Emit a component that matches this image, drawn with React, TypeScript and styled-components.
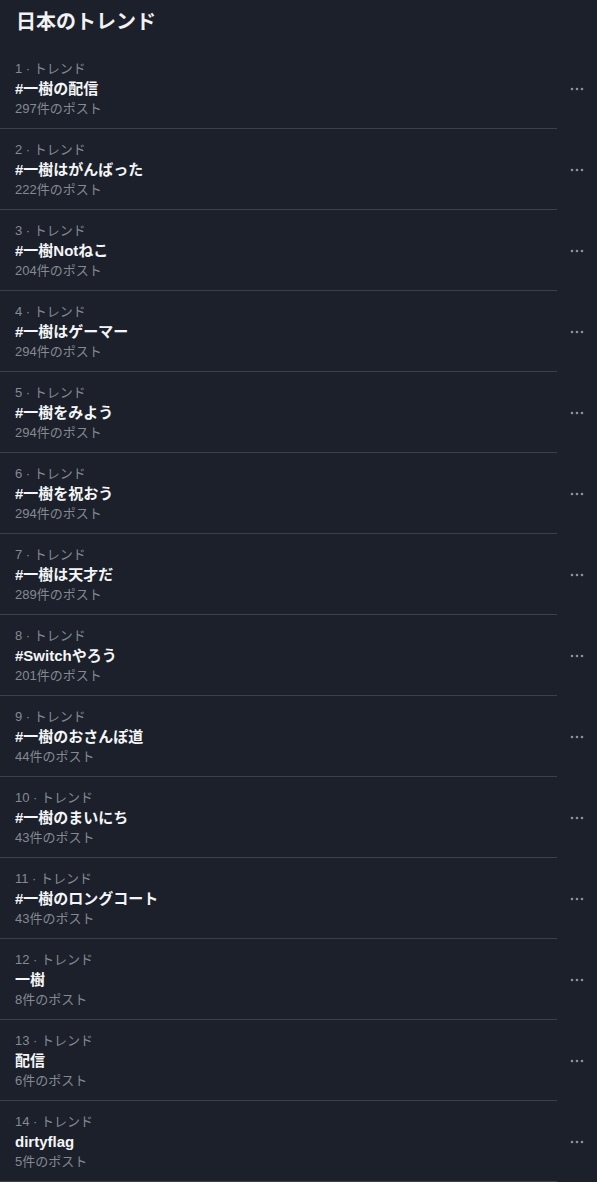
import React from "react";
import styled, { createGlobalStyle } from "styled-components";

const GlobalStyle = createGlobalStyle`
  html, body {
    margin: 0;
    padding: 0;
    background: #1b202a;
  }
  body {
    font-family: "Liberation Sans", "Noto Sans CJK JP", sans-serif;
    -webkit-font-smoothing: antialiased;
  }
`;

const Page = styled.div`
  width: 597px;
  min-height: 1182px;
  background: #1b202a;
  color: #ffffff;
  overflow: hidden;
`;

const Header = styled.h1`
  margin: 0;
  padding: 10px 16px 14px;
  font-size: 20px;
  line-height: 24px;
  font-weight: 700;
  color: #f1f2f4;
`;

const List = styled.div`
  display: flex;
  flex-direction: column;
`;

const Row = styled.div`
  display: flex;
  align-items: stretch;
`;

const Main = styled.div`
  width: 557px;
  box-sizing: border-box;
  padding: 11px 0 9px 15px;
  border-bottom: 1px solid #3b4049;
  display: flex;
  flex-direction: column;
`;

const Meta = styled.div`
  font-size: 13px;
  line-height: 20px;
  color: #858a92;
`;

const Title = styled.div`
  font-size: 15px;
  line-height: 20px;
  font-weight: 700;
  color: #f4f5f7;
`;

const Count = styled.div`
  font-size: 13px;
  line-height: 20px;
  color: #858a92;
`;

const More = styled.div`
  flex: 1;
  display: flex;
  align-items: center;
  justify-content: center;
  color: #8d9199;
`;

const Dots = () => (
  <svg width="14" height="4" viewBox="0 0 14 4" aria-hidden="true">
    <circle cx="2" cy="2" r="1.3" fill="currentColor" />
    <circle cx="7" cy="2" r="1.3" fill="currentColor" />
    <circle cx="12" cy="2" r="1.3" fill="currentColor" />
  </svg>
);

type Trend = { title: string; posts: number };

const trends: Trend[] = [
  { title: "#一樹の配信", posts: 297 },
  { title: "#一樹はがんばった", posts: 222 },
  { title: "#一樹Notねこ", posts: 204 },
  { title: "#一樹はゲーマー", posts: 294 },
  { title: "#一樹をみよう", posts: 294 },
  { title: "#一樹を祝おう", posts: 294 },
  { title: "#一樹は天才だ", posts: 289 },
  { title: "#Switchやろう", posts: 201 },
  { title: "#一樹のおさんぽ道", posts: 44 },
  { title: "#一樹のまいにち", posts: 43 },
  { title: "#一樹のロングコート", posts: 43 },
  { title: "一樹", posts: 8 },
  { title: "配信", posts: 6 },
  { title: "dirtyflag", posts: 5 },
];

export default function App() {
  return (
    <>
      <GlobalStyle />
      <Page>
        <Header>日本のトレンド</Header>
        <List>
          {trends.map((t, i) => (
            <Row key={i}>
              <Main>
                <Meta>{i + 1} · トレンド</Meta>
                <Title>{t.title}</Title>
                <Count>{t.posts}件のポスト</Count>
              </Main>
              <More>
                <Dots />
              </More>
            </Row>
          ))}
        </List>
      </Page>
    </>
  );
}
